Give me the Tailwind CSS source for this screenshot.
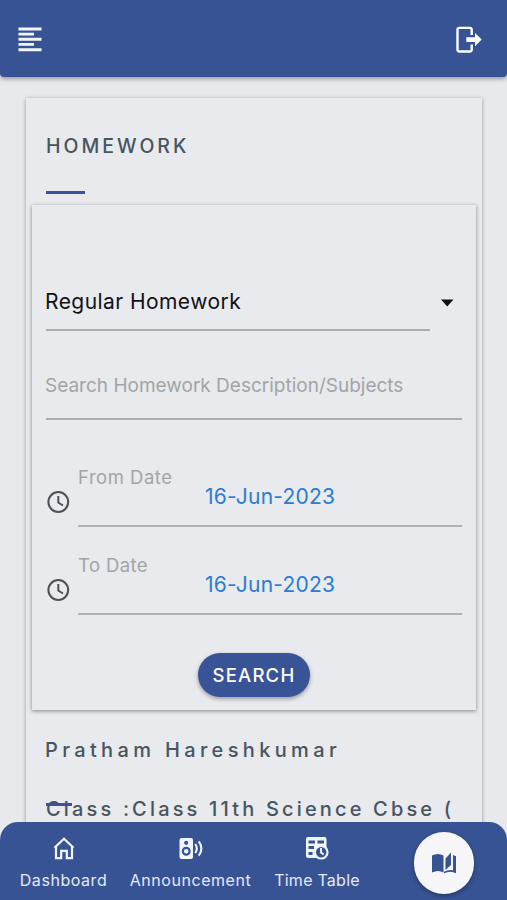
<!DOCTYPE html>
<html lang="en">
<head>
<meta charset="utf-8">
<meta name="viewport" content="width=device-width, initial-scale=1">
<title>Homework</title>
<script src="https://cdn.jsdelivr.net/npm/@tailwindcss/browser@4"></script>
</head>
<body class="bg-[#e8e9ed] font-['Inter',sans-serif]">
<div class="relative flex h-[900px] w-[507px] flex-col overflow-hidden">
  <header class="flex h-[77px] shrink-0 items-center justify-between rounded-b-[4px] bg-[#385394] px-[18px] pt-[2px] pr-[24px] shadow-[0_2px_4px_rgba(60,50,80,.45)]">
    <svg class="h-[25px] w-[24px]" viewBox="0 0 24 25" fill="#f1f5ff"><path d="M.5 .5h23v3h-23zM.5 5.7h15.500v2.800h-15.500zM.5 10.800h23v3h-23zM.5 16h15.500v2.800h-15.500zM.5 21.200h23v3h-23z"/></svg>
    <svg class="h-[28px] w-[28px]" viewBox="0 0 28 28"><path d="M16.700 9V3.700a1.800 1.800 0 0 0-1.800-1.800H4.300A1.800 1.800 0 0 0 2.500 3.700v20a1.800 1.800 0 0 0 1.800 1.800h10.600a1.800 1.800 0 0 0 1.800-1.800v-5.200" fill="none" stroke="#fff" stroke-width="2.400"/><path d="M11.300 11.300h8.700V7l6.700 6.600-6.700 6.600v-4.300h-8.700z" fill="#fff"/></svg>
  </header>

  <main class="mx-[26px] mt-[21px] flex h-[802px] w-[456px] shrink-0 flex-col bg-[#e8eaed] px-[6px] shadow-[0_1px_4px_rgba(0,0,0,.35)]">
    <div class="h-[107px] px-[14px] pt-[35px] text-[#475560]">
      <h1 class="text-[19.500px] leading-[26px] font-medium tracking-[3px]">HOMEWORK</h1>
      <div class="mt-[32px] h-[3px] w-[39px] bg-[#3f509a]"></div>
    </div>

    <section class="flex h-[505px] shrink-0 flex-col bg-[#e8eaed] pr-[14px] pl-[14px] shadow-[0_1px_4px_rgba(0,0,0,.45)]">
      <div class="flex h-[126px] items-end">
        <div class="flex h-[46px] w-[384px] items-start border-b-2 border-[#acadb1] pt-px text-[21px] leading-[32px] tracking-[.44px] text-[#101114]"><span class="-ml-px">Regular Homework</span></div>
        <svg class="mb-[24px] ml-[10px] h-[8px] w-[14px]" viewBox="0 0 14 8"><path d="M1 .5h12.500L7.250 7.500z" fill="#111"/></svg>
      </div>
      <div class="h-[89px] w-[416px] border-b-2 border-[#abacb0] pt-[40px] text-[19px] leading-[30px] text-[#a3a4a9]"><span class="-ml-px">Search Homework Description/Subjects</span></div>
      <div class="flex h-[107px] items-end">
        <svg class="mb-[13px] h-[24px] w-[26px]" viewBox="0 0 26 24" fill="none" stroke="#4c5159" stroke-width="2"><circle cx="12.300" cy="12" r="9.900"/><path d="M12.300 6v6.500l4.700 3"/></svg>
        <div class="ml-[6px] h-[66px] w-[384px] border-b-2 border-[#b0b1b4]">
          <div class="h-[20px] pt-[3px] text-[18.500px] leading-[26px] tracking-[.5px] text-[#a3a4a9]"><span>From Date</span></div>
          <div class="pt-px pl-[127px] text-[21px] leading-[30px] tracking-[.2px] text-[#2b7cd3]"><span>16-Jun-2023</span></div>
        </div>
      </div>
      <div class="flex h-[88px] items-end">
        <svg class="mb-[13px] h-[24px] w-[26px]" viewBox="0 0 26 24" fill="none" stroke="#4c5159" stroke-width="2"><circle cx="12.300" cy="12" r="9.900"/><path d="M12.300 6v6.500l4.700 3"/></svg>
        <div class="ml-[6px] h-[66px] w-[384px] border-b-2 border-[#b0b1b4]">
          <div class="h-[20px] pt-[3px] text-[18.500px] leading-[26px] tracking-[.4px] text-[#a3a4a9]"><span>To Date</span></div>
          <div class="pt-px pl-[127px] text-[21px] leading-[30px] tracking-[.2px] text-[#2b7cd3]"><span>16-Jun-2023</span></div>
        </div>
      </div>
      <button class="mt-[38px] ml-[152px] h-[44px] w-[112px] rounded-full bg-[#385396] pt-[2px] text-[18.500px] font-medium tracking-[1.200px] text-white shadow-[0_2px_4px_rgba(0,0,0,.35)]"><span>SEARCH</span></button>
    </section>

    <div class="px-[14px] pt-[26px] text-[20px] leading-[28px] font-medium whitespace-nowrap text-[#475560]">
      <p class="tracking-[4.350px]"><span class="-ml-px">Pratham Hareshkumar</span></p>
      <p class="relative mt-[31px] tracking-[3.160px]"><span>Class :Class 11th Science Cbse (</span><i class="absolute top-[8px] left-0 h-[3px] w-[26px] bg-[#3f509a]"></i></p>
    </div>
  </main>

  <nav class="absolute bottom-0 left-0 flex h-[78px] w-[507px] rounded-t-[18px] bg-[#385394] text-[16px] leading-[22px] tracking-[.55px] text-[#e2e9fb]">
    <a class="flex w-[127px] flex-col items-center pt-[13px]">
      <svg class="h-[26px] w-[26px]" viewBox="0 0 26 26" fill="none" stroke="#f1f5ff" stroke-width="2.200"><path d="M3.500 12.800 13 3.800l9.500 9M5 11.500v11.600h5.200v-7.200h5.600v7.200H21V11.500"/></svg>
      <span class="mt-[8px]">Dashboard</span>
    </a>
    <a class="flex w-[127px] flex-col items-center pt-[13px]">
      <svg class="h-[26px] w-[26px]" viewBox="0 0 26 26"><rect x="1.500" y="3" width="13.500" height="21" rx="2" fill="#f1f5ff"/><circle cx="8.200" cy="7.800" r="2.100" fill="#385394"/><circle cx="8.200" cy="16.300" r="3.400" fill="none" stroke="#385394" stroke-width="2.200"/><path d="M17.300 9q3 4.500 0 9M20.800 6.300q5.200 7.200 0 14.400" fill="none" stroke="#f1f5ff" stroke-width="2.100"/></svg>
      <span class="mt-[8px]">Announcement</span>
    </a>
    <a class="flex w-[126px] flex-col items-center pt-[13px]">
      <svg class="h-[26px] w-[26px]" viewBox="0 0 26 26"><rect x="2" y="2" width="20.500" height="21" rx="2" fill="#f1f5ff"/><path d="M4.500 5.500h6.500v3h-6.500zM13.500 5.500h6.500v3h-6.500zM4.500 11h5.500v3h-5.500zM4.500 17h4v3h-4z" fill="#385394"/><circle cx="17.200" cy="17.200" r="6.300" fill="#385394" stroke="#f1f5ff" stroke-width="2.200"/><path d="M17 13v4.500l2.700 2" fill="none" stroke="#f1f5ff" stroke-width="1.900"/></svg>
      <span class="mt-[8px] tracking-[.25px]">Time Table</span>
    </a>
    <a class="mt-[10px] ml-[34px] flex h-[62px] w-[60px] items-center justify-center rounded-full bg-[#f6f6f8] shadow-[0_2px_4px_rgba(0,0,0,.35)]">
      <svg class="h-[24px] w-[26px]" viewBox="0 0 26 24" fill="#385394"><path d="M1 4.500q6-3 11.500 0v17q-5.500-3-11.500 0zM14.500 7.500l5.500-6v12.500l-5.500 5zM22 4l3 1.200v17q-5.500-3-12 0v-1.500q4.500-2.500 9-1.500z"/></svg>
    </a>
  </nav>
</div>
</body>
</html>
